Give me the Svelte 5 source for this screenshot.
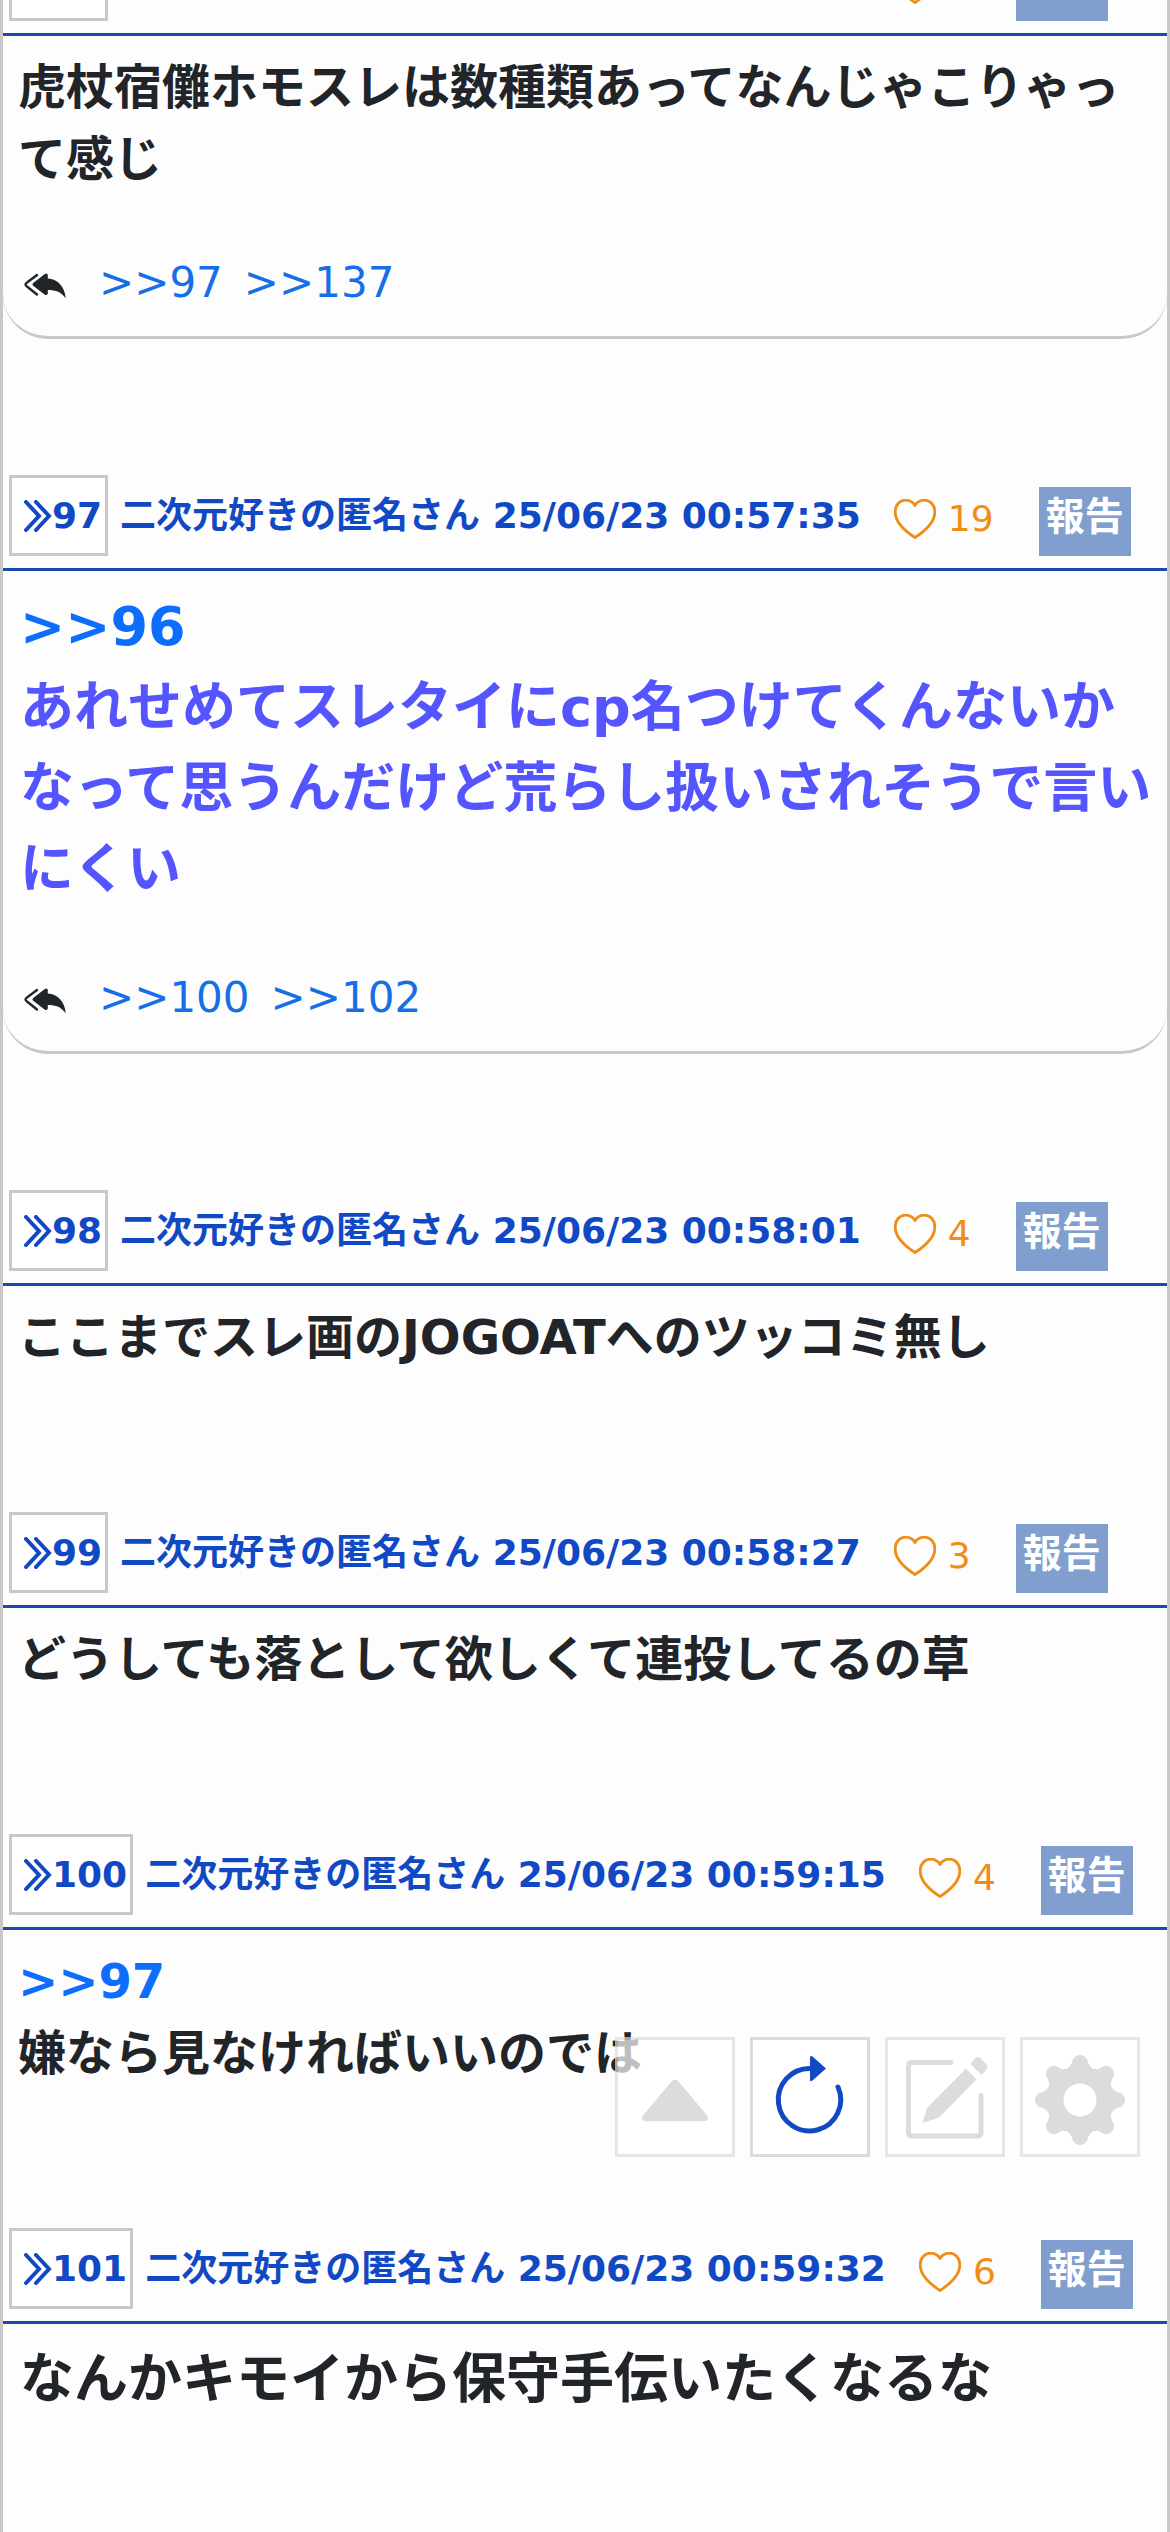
<script lang="ts">
	interface Post {
		id: number;
		date: string;
		likes: number;
		anchor?: number;
		body: string;
		size?: 'normal' | 'large';
		hot?: boolean;
		replies?: number[];
	}

	const name = '二次元好きの匿名さん';

	const posts: Post[] = [
		{
			id: 96,
			date: '25/06/23 00:56:48',
			likes: 7,
			body: '虎杖宿儺ホモスレは数種類あってなんじゃこりゃって感じ',
			replies: [97, 137],
		},
		{
			id: 97,
			date: '25/06/23 00:57:35',
			likes: 19,
			anchor: 96,
			body: 'あれせめてスレタイにcp名つけてくんないかなって思うんだけど荒らし扱いされそうで言いにくい',
			size: 'large',
			hot: true,
			replies: [100, 102],
		},
		{ id: 98, date: '25/06/23 00:58:01', likes: 4, body: 'ここまでスレ画のJOGOATへのツッコミ無し' },
		{ id: 99, date: '25/06/23 00:58:27', likes: 3, body: 'どうしても落として欲しくて連投してるの草' },
		{ id: 100, date: '25/06/23 00:59:15', likes: 4, anchor: 97, body: '嫌なら見なければいいのでは' },
		{
			id: 101,
			date: '25/06/23 00:59:32',
			likes: 6,
			body: 'なんかキモイから保守手伝いたくなるな',
			size: 'large',
		},
	];

	// Eight soft teeth around the centre of the 114 unit icon box
	function gearPath(cx: number, cy: number) {
		const points: string[] = [];
		for (let deg = 0; deg < 360; deg += 1.5) {
			const a = (deg * Math.PI) / 180;
			const s = Math.cos(8 * a);
			const r = 39.5 + 5.5 * Math.sign(s) * Math.abs(s) ** 0.7;
			points.push(`${(cx + r * Math.cos(a)).toFixed(1)} ${(cy + r * Math.sin(a)).toFixed(1)}`);
		}
		return `M${points.join('L')}Z`;
	}

	const hole = 'M40.5 60a16.5 16.5 0 1 0 33 0a16.5 16.5 0 1 0 -33 0Z';
	const gear = gearPath(57, 60) + hole;
</script>

<div class="screen">
	<main class="thread">
		{#each posts as post (post.id)}
			<article class="post" class:has-replies={post.replies} id="res{post.id}">
				<header class="head">
					<button class="res-no" type="button" aria-label="{post.id}に返信">
						<svg class="chevrons" viewBox="0 0 28 32" aria-hidden="true">
							<path d="M2 2L15 16L2 30M12 2L25 16L12 30" />
						</svg>{post.id}
					</button>
					<span class="meta">{name} {post.date}</span>
					<button class="like" type="button" aria-label="いいね {post.likes}">
						<svg class="heart" viewBox="0 0 42 40" aria-hidden="true">
							<path
								d="M21 6.5C19 3 15.500 1.200 11.500 1.200C5.500 1.200 1.200 6 1.200 13C1.200 23 11 32 21 38.500C31 32 40.800 23 40.800 13C40.800 6 36.500 1.200 30.500 1.200C26.500 1.200 23 3 21 6.500Z"
							/>
						</svg>{post.likes}
					</button>
					<button class="report" type="button">報告</button>
				</header>

				<div class="card">
					<p class="body {post.size ?? 'normal'}" class:hot={post.hot}>
						{#if post.anchor}<a href="#res{post.anchor}">&gt;&gt;{post.anchor}</a><br />{/if}{post.body}
					</p>
					{#if post.replies}
						<div class="replies">
							<svg class="reply-all" viewBox="0 0 42 26" aria-hidden="true">
								<path class="outline" d="M13 2L3 9.500Q0 11.500 3 13.500L13 21.500" />
								<path
									d="M9.500 9.800L20.500 1.200Q23.800 -.5 23.800 2.500V5.500C34 6 41 14 41.700 25.500C37.500 19 32 17 23.800 17V20.300Q23.800 23 20.500 21.500L9.500 13Q7.500 11.400 9.500 9.800Z"
								/>
							</svg>
							{#each post.replies as reply}
								<a href="#res{reply}">&gt;&gt;{reply}</a>
							{/each}
						</div>
					{/if}
				</div>
			</article>
		{/each}
	</main>

	<nav class="tools" aria-label="操作">
		<button class="tool dim" type="button" aria-label="上へ">
			<svg viewBox="0 0 114 114">
				<path d="M53 42Q57 37.500 61 42L89 75.500Q92 81.300 85.500 81.300H28.500Q22 81.300 25 75.500Z" />
			</svg>
		</button>
		<button class="tool" type="button" aria-label="更新">
			<svg viewBox="0 0 114 114">
				<path class="ring" d="M57 28.500A31.200 31.200 0 1 0 85 47" />
				<path d="M57 17.500Q57 15 59.500 16.500L73 28.500L59.500 40.500Q57 42 57 40Z" />
			</svg>
		</button>
		<button class="tool dim" type="button" aria-label="書き込む">
			<svg viewBox="0 0 114 114">
				<path class="frame" d="M63 22.500H24Q20.500 22.500 20.500 26V92Q20.500 96 24 96H89.500Q93 96 93 92V55.500" />
				<path d="M78 28.500L88.500 39.500L51 77.500L35.500 82.800Q34.500 83 34.800 82L39 68Z" />
				<path d="M82.500 24L87.500 18Q90 16 92.500 18L98.500 24.500Q100.500 27 98.500 29.500L93.500 35Z" />
			</svg>
		</button>
		<button class="tool dim" type="button" aria-label="設定">
			<svg viewBox="0 0 114 114">
				<path d={gear} fill-rule="evenodd" />
			</svg>
		</button>
	</nav>
</div>

<style>
	:global(body) {
		margin: 0;
		background: #fdfdfd;
	}

	.screen {
		height: 100vh;
		overflow: hidden;
		font-family: 'DejaVu Sans', 'Noto Sans CJK JP', sans-serif;
		color: #212529;
	}

	/* The list is scrolled part of the way into its first header */
	.thread {
		margin-top: -60px;
		border: solid #c8c8c8;
		border-width: 0 3px;
	}

	.post {
		padding-bottom: 139px;
	}

	.post.has-replies {
		padding-bottom: 136px;
	}

	button {
		margin: 0;
		padding: 0;
		border: 0;
		background: none;
		font: inherit;
		color: inherit;
		cursor: pointer;
	}

	a {
		color: #0d6efd;
		text-decoration: none;
	}

	.head {
		display: flex;
		align-items: flex-end;
		padding: 0 6px 12px;
		border-bottom: 3px solid #1a4bab;
		color: #1149c4;
		font-size: 36px;
		line-height: 54px;
		white-space: nowrap;
	}

	.res-no {
		display: flex;
		align-items: center;
		box-sizing: border-box;
		height: 81px;
		padding: 0 3px 0 12px;
		border: 3px solid #c8c8c8;
		background: #fff;
		font-weight: bold;
	}

	.chevrons {
		width: 28px;
		height: 32px;
		fill: none;
		stroke: currentColor;
		stroke-width: 4;
		stroke-linecap: round;
	}

	.meta {
		margin-left: 12px;
		padding-bottom: 13px;
		font-weight: bold;
	}

	.like {
		display: flex;
		align-items: center;
		gap: 12px;
		margin-left: 33px;
		padding-bottom: 10px;
		color: #ef8d18;
	}

	.heart {
		width: 42px;
		height: 40px;
		fill: none;
		stroke: currentColor;
		stroke-width: 2.8;
		stroke-linejoin: round;
	}

	.report {
		box-sizing: border-box;
		height: 69px;
		margin-left: 45px;
		padding: 0 7px 9px;
		background: #819fce;
		color: #fff;
		font-size: 39px;
		line-height: 60px;
		font-weight: bold;
	}

	.card {
		padding: 15px 9px 0 15px;
	}

	.has-replies .card {
		padding-bottom: 22px;
		border-bottom: 3px solid #c8c8c8;
		border-radius: 0 0 45px 45px;
	}

	.body {
		margin: 0;
		font-size: 48px;
		line-height: 72px;
		font-weight: bold;
	}

	.body.large {
		padding-left: 2px;
		font-size: 54px;
		line-height: 81px;
	}

	.body.hot {
		color: #5555ff;
	}

	.replies {
		display: flex;
		align-items: center;
		gap: 21px;
		margin-top: 56px;
		padding-left: 6px;
		font-size: 42px;
		line-height: 63px;
	}

	.replies a {
		color: #176fe6;
	}

	.reply-all {
		width: 42px;
		height: 26px;
		margin: 6px 12px 0 0;
		fill: #212529;
	}

	.reply-all .outline {
		fill: none;
		stroke: #212529;
		stroke-width: 2.4;
		stroke-linecap: round;
	}

	.tools {
		position: fixed;
		right: 30px;
		bottom: 375px;
		display: flex;
		gap: 15px;
	}

	.tool {
		box-sizing: border-box;
		width: 120px;
		height: 120px;
		border: 3px solid #dcdcdc;
		background: #fff;
		color: #1149c4;
	}

	.tool.dim {
		color: #cdcdcd;
		opacity: 0.7;
	}

	.tool svg {
		display: block;
		width: 100%;
		height: 100%;
		fill: currentColor;
	}

	.tool .ring,
	.tool .frame {
		fill: none;
		stroke: currentColor;
		stroke-width: 5;
		stroke-linecap: round;
	}
</style>
